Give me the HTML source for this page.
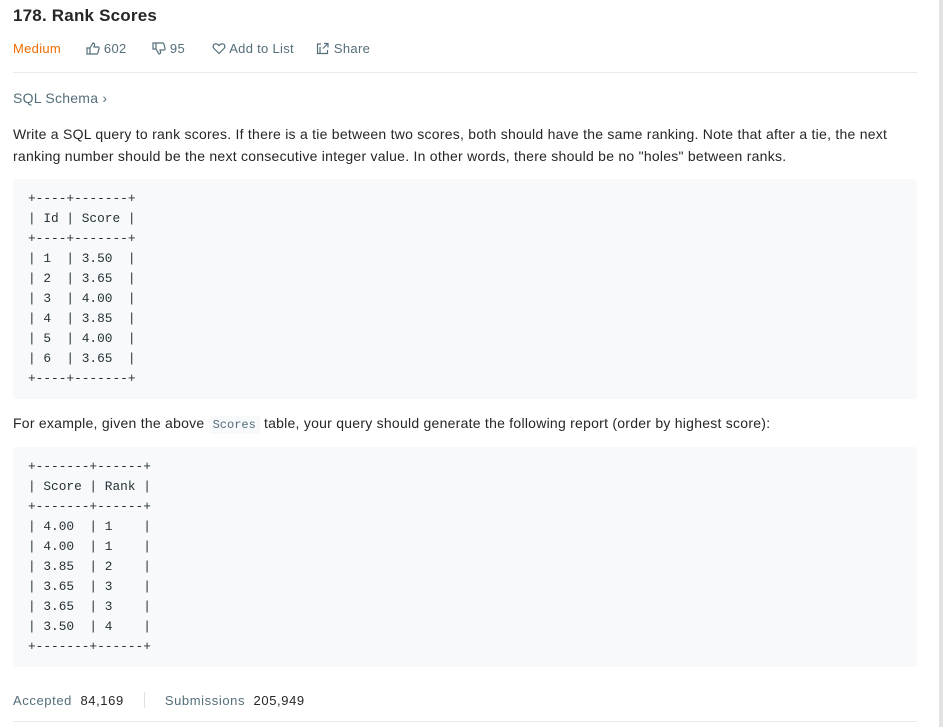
<!DOCTYPE html>
<html><head><style>
body{margin:0;background:#fff;width:943px;height:727px;overflow:hidden;position:relative;font-family:"Liberation Sans",sans-serif;color:#262626}
.sb{position:absolute;right:0;top:0;width:4px;height:727px;background:#e3e3e3}
h1{position:absolute;left:13px;top:6px;margin:0;font-size:17px;font-weight:600;color:#262626;letter-spacing:0.2px}
.meta{position:absolute;top:41px;left:13px;font-size:13px;color:#546e7a;white-space:nowrap;letter-spacing:0.3px}
.meta span{position:absolute;top:0}
.hr{position:absolute;left:13px;width:904px;height:1px;background:#eaeaea}
.txt{position:absolute;left:13px;font-size:14px;line-height:22px;color:#262626;width:900px;letter-spacing:0.25px}
pre{position:absolute;left:13px;width:904px;margin:0;background:#f7f9fa;border-radius:3px;font-family:"Liberation Mono",monospace;font-size:12.8px;line-height:20px;color:#263238;padding:10px 15px;box-sizing:border-box}
code{font-family:"Liberation Mono",monospace;font-size:12px;background:#f7f9fa;color:#546e7a;padding:2px 4px;border-radius:3px;letter-spacing:0}
</style></head><body>
<div class="sb"></div>
<h1>178. Rank Scores</h1>
<div class="meta">
<span style="left:0;color:#ef6c00">Medium</span>
<span style="left:73px"><svg width="14" height="13" viewBox="0 0 14 13" style="vertical-align:-2px" fill="none" stroke="#546e7a" stroke-width="1.2"><path d="M1 6h3v6H1zM4 6l3-5c1.2 0 1.8.8 1.5 2L8 5h4c.8 0 1.3.7 1.1 1.4l-1.3 4.8c-.2.5-.6.8-1.1.8H4"/></svg> 602</span>
<span style="left:139px"><svg width="14" height="13" viewBox="0 0 14 13" style="vertical-align:-2px" fill="none" stroke="#546e7a" stroke-width="1.2"><path d="M1 1h3v6H1zM4 7l3 5c1.2 0 1.8-.8 1.5-2L8 8h4c.8 0 1.3-.7 1.1-1.4L11.8 1.8C11.6 1.3 11.2 1 10.7 1H4"/></svg> 95</span>
<span style="left:199px"><svg width="14" height="13" viewBox="0 0 14 13" style="vertical-align:-2px" fill="none" stroke="#546e7a" stroke-width="1.2"><path d="M7 11.5L2 6.5C0.5 5 1 2 3.5 1.8 5 1.7 6.3 2.6 7 3.6 7.7 2.6 9 1.7 10.5 1.8 13 2 13.5 5 12 6.5z"/></svg> Add to List</span>
<span style="left:303px"><svg width="14" height="13" viewBox="0 0 14 13" style="vertical-align:-2px" fill="none" stroke="#546e7a" stroke-width="1.2"><path d="M5 2H1.5v9.5h10V8M8 1.5h4v4M12 1.5L7 6.5M4 11V5"/></svg> Share</span>
</div>
<div class="hr" style="top:72px"></div>
<div class="txt" style="top:87px;color:#546e7a">SQL Schema ›</div>
<div class="txt" style="top:123px">Write a SQL query to rank scores. If there is a tie between two scores, both should have the same ranking. Note that after a tie, the next ranking number should be the next consecutive integer value. In other words, there should be no "holes" between ranks.</div>
<pre style="top:179px;height:220px">+----+-------+
| Id | Score |
+----+-------+
| 1  | 3.50  |
| 2  | 3.65  |
| 3  | 4.00  |
| 4  | 3.85  |
| 5  | 4.00  |
| 6  | 3.65  |
+----+-------+</pre>
<div class="txt" style="top:412px">For example, given the above <code>Scores</code> table, your query should generate the following report (order by highest score):</div>
<pre style="top:447px;height:220px">+-------+------+
| Score | Rank |
+-------+------+
| 4.00  | 1    |
| 4.00  | 1    |
| 3.85  | 2    |
| 3.65  | 3    |
| 3.65  | 3    |
| 3.50  | 4    |
+-------+------+</pre>
<div class="txt" style="top:690px;font-size:13px;letter-spacing:0.6px"><span style="color:#546e7a">Accepted</span>&nbsp; 84,169<span style="display:inline-block;width:1px;height:16px;background:#e0e0e0;margin:0 20px;vertical-align:-3px"></span><span style="color:#546e7a">Submissions</span>&nbsp; 205,949</div>
<div class="hr" style="top:721px"></div>
</body></html>
